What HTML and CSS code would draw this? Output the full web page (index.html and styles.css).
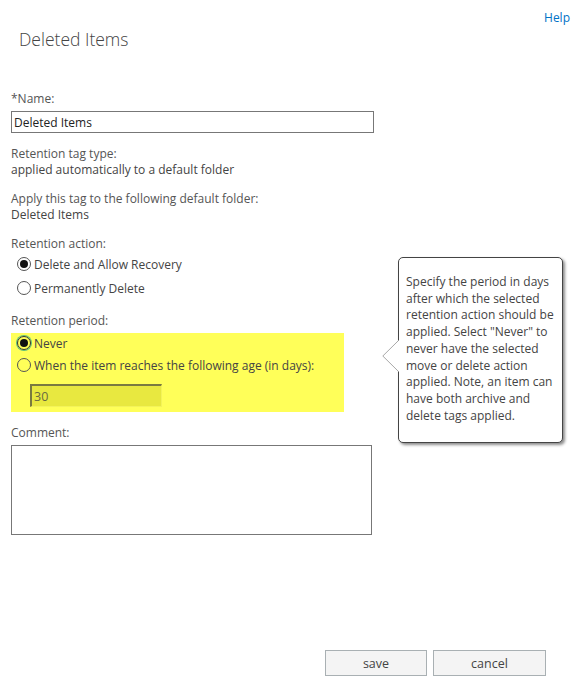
FILE: index.html
```html
<!DOCTYPE html>
<html>
<head>
<meta charset="utf-8">
<link rel="stylesheet" href="styles.css">
</head>
<body>
<div class="page">
  <div class="header">
    <a class="help" href="#">Help</a>
    <h1 class="title">Deleted Items</h1>
  </div>
  <div class="form">
    <div class="group">
      <div class="label">*Name:</div>
      <input class="text name" type="text" value="Deleted Items">
    </div>
    <div class="group">
      <div class="label">Retention tag type:</div>
      <div class="value">applied automatically to a default folder</div>
    </div>
    <div class="group">
      <div class="label">Apply this tag to the following default folder:</div>
      <div class="value">Deleted Items</div>
    </div>
    <div class="group">
      <div class="label">Retention action:</div>
      <label class="radio-row"><input type="radio" name="action" checked><span>Delete and Allow Recovery</span></label>
      <label class="radio-row"><input type="radio" name="action"><span>Permanently Delete</span></label>
    </div>
    <div class="group">
      <div class="label">Retention period:</div>
      <div class="highlight">
        <label class="radio-row first"><input class="focused" type="radio" name="period" checked><span>Never</span></label>
        <label class="radio-row"><input type="radio" name="period"><span>When the item reaches the following age (in days):</span></label>
        <input class="text days" type="text" value="30" readonly>
      </div>
    </div>
    <div class="group">
      <div class="label">Comment:</div>
      <textarea class="comment"></textarea>
    </div>
  </div>
  <div class="footer">
    <button class="btn save">save</button>
    <button class="btn cancel">cancel</button>
  </div>
  <div class="callout">
    <svg class="arrow" width="17" height="32" viewBox="0 0 17 32"><polygon points="16.5,0.5 0.8,16 16.5,31.5" fill="#fff" stroke="#a8a8a8" stroke-width="1"/><rect x="16" y="1" width="2" height="30" fill="#fff"/></svg>
    <p>Specify the period in days after which the selected retention action should be applied. Select "Never" to never have the selected move or delete action applied. Note, an item can have both archive and delete tags applied.</p>
  </div>
</div>
</body>
</html>
```

FILE: styles.css
```css
html, body {
  margin: 0;
  padding: 0;
  background: #fff;
}
body {
  font-family: "Open Sans", "Noto Sans", sans-serif;
  font-size: 12px;
  color: #444;
}
.page {
  position: relative;
  min-height: 683px;
  display: flex;
  flex-direction: column;
  box-sizing: border-box;
}
.header {
  display: flex;
  flex-direction: column;
  padding: 9px 8px 0 19px;
}
.help {
  align-self: flex-end;
  color: #0072c6;
  text-decoration: none;
  font-size: 12px;
  line-height: 18px;
}
.title {
  margin: 0;
  font-weight: 300;
  font-size: 17.5px;
  line-height: 24px;
  color: #444;
}
.form {
  display: flex;
  flex-direction: column;
  padding: 40px 0 0 11px;
  gap: 13px;
}
.group {
  display: flex;
  flex-direction: column;
}
.label, .value {
  line-height: 16px;
  height: 16px;
  white-space: nowrap;
}
.label {
  color: #555;
}
.group > .label + .text,
.group > .label + .comment,
.group > .label + .highlight {
  margin-top: 4px;
}
.text {
  font-family: inherit;
  font-size: 12px;
  color: #222;
  box-sizing: border-box;
  border: 1px solid #777;
  padding: 0 2px;
  margin: 0;
  outline: none;
}
.name {
  width: 363px;
  height: 22px;
}
.radio-row {
  display: flex;
  align-items: center;
  height: 24px;
  padding-left: 6px;
  gap: 3px;
  white-space: nowrap;
}
.radio-row input {
  appearance: none;
  -webkit-appearance: none;
  margin: 0;
  width: 14px;
  height: 14px;
  border: 1px solid #555;
  border-radius: 50%;
  box-sizing: border-box;
  background: transparent;
  display: grid;
  place-content: center;
}
.radio-row input:checked::before {
  content: "";
  width: 8px;
  height: 8px;
  border-radius: 50%;
  background: #111;
}
.radio-row input.focused {
  box-shadow: 0 0 0 1px #5fbf7a;
  border-color: #333;
}
.radio-row span {
  font-size: 12px;
}
.highlight {
  width: 333px;
  background: #ffff59;
  display: flex;
  flex-direction: column;
  padding-bottom: 5px;
}
.highlight .radio-row.first {
  height: 20px;
}
.days {
  margin: 7px 0 0 19px;
  width: 132px;
  height: 23px;
  background: #e8e840;
  border: 1px solid #f3f35a;
  border-top: 2px solid #7a7a40;
  border-left: 2px solid #7a7a40;
  color: #6a6a40;
  font-size: 12.5px;
}
.comment {
  width: 361px;
  height: 90px;
  box-sizing: border-box;
  border: 1px solid #777;
  margin: 0;
  resize: none;
  font-family: inherit;
}
.footer {
  margin-top: auto;
  display: flex;
  justify-content: flex-end;
  gap: 6px;
  padding: 0 32px 7px 0;
}
.btn {
  height: 26px;
  box-sizing: border-box;
  border: 1px solid #a9b0b3;
  background: #f4f4f4;
  color: #444;
  font-family: inherit;
  font-size: 12.5px;
  padding: 0;
}
.save { width: 102px; }
.cancel { width: 113px; }
.callout {
  position: absolute;
  left: 398px;
  top: 257px;
  width: 165px;
  height: 186px;
  box-sizing: border-box;
  border: 1px solid #444;
  border-radius: 5px;
  background: #fff;
  box-shadow: 2px 2px 3px rgba(0,0,0,0.45);
  padding: 16px 6px 0 7px;
}
.callout p {
  margin: 0;
  font-size: 12px;
  line-height: 16.7px;
  color: #444;
}
.arrow {
  position: absolute;
  left: -17px;
  top: 82px;
}
```
